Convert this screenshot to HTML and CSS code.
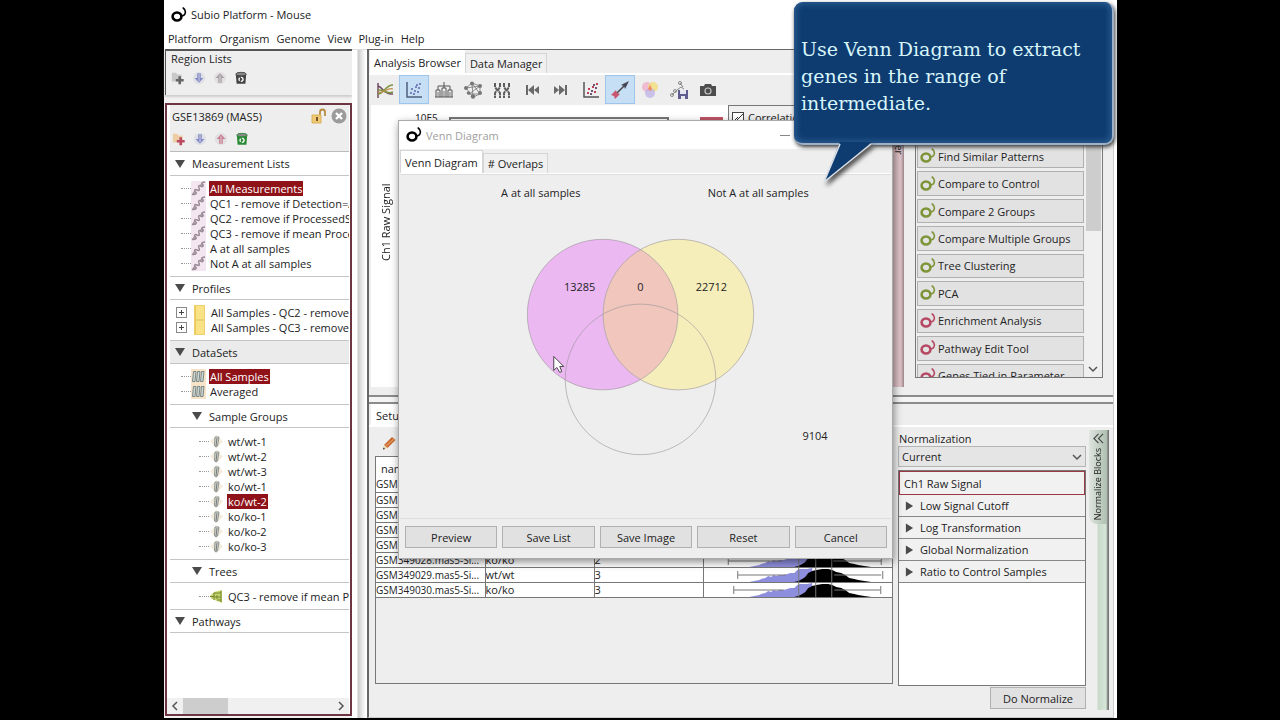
FILE: index.html
```html
<!DOCTYPE html>
<html lang="en">
<head>
<meta charset="utf-8">
<title>Subio Platform - Mouse</title>
<link rel="stylesheet" href="styles.css">
</head>
<body>
<svg class="defs" aria-hidden="true">
  <symbol id="brand" viewBox="0 0 16 16"><ellipse cx="6" cy="9.500" rx="4.400" ry="4" fill="none" stroke="currentColor" stroke-width="2.600"/><path d="M12.200 1c1.800 1.400 2.600 3.800 1.800 5.800-.6 1.500-1.800 2.200-3.600 2.200" fill="none" stroke="currentColor" stroke-width="1.600" stroke-linecap="round"/></symbol>
  <symbol id="folder-add" viewBox="0 0 16 16"><path d="M1 2h5l1 2h5v8H1z" fill="var(--a)"/><path d="M8.500 6h3v3h3v3h-3v3h-3v-3h-3V9h3z" fill="var(--b)"/></symbol>
  <symbol id="down" viewBox="0 0 16 16"><circle cx="8" cy="8" r="7" fill="#dfe0e6"/><path d="M6 2.500h4V8h3l-5 5.500L3 8h3z" fill="currentColor"/><path d="M8 3v9" stroke="#fff" stroke-width=".7"/></symbol>
  <symbol id="up" viewBox="0 0 16 16"><circle cx="8" cy="8" r="7" fill="#e2e0e2"/><path d="M6 13.500h4V8h3L8 2.500 3 8h3z" fill="currentColor"/><path d="M8 5v8" stroke="#fff" stroke-width=".7"/></symbol>
  <symbol id="bin" viewBox="0 0 16 16"><path d="M2 3.500h12l-1 11H3z" fill="currentColor"/><ellipse cx="8" cy="3.500" rx="6" ry="2" fill="#888" stroke="currentColor"/><circle cx="8" cy="9.500" r="2.300" fill="none" stroke="#fff" stroke-width="1.500" stroke-dasharray="3.500 1.300"/></symbol>
  <symbol id="heat" viewBox="0 0 15 15"><path d="M0 0h15v15H0z" fill="#f4e6f1"/><path d="M1 13c2 1 4 0 3-2s0-3 2-2 3 0 2-2 0-3 2-2 2-1 1-2 1-2 3-2" fill="none" stroke="#9a8a96" stroke-width="1.500"/><circle cx="4" cy="12" r="1.500" fill="none" stroke="#9a8a96"/><circle cx="11" cy="4.500" r="1.500" fill="none" stroke="#9a8a96"/></symbol>
  <symbol id="tubes" viewBox="0 0 15 15"><path d="M0 0h15v15H0z" fill="#f6e3c8"/><g fill="#cdd6d4" stroke="#71807f" stroke-width=".9"><path d="M2.500 2.500h2.500L4 12.500H1.500zM6.500 2.500H9L8 12.500H5.500zM10.500 2.500H13L12 12.500H9.500z"/></g></symbol>
  <symbol id="tube" viewBox="0 0 15 15"><path d="M1 7.500 7.500 1 14 7.500 7.500 14z" fill="#f3ecdc"/><path d="M6 3h4L8.500 12q-1.500 2-3 0z" fill="#d2d8d2" stroke="#8f958f"/><path d="M8 4 7 12" stroke="#777"/></symbol>
  <symbol id="book" viewBox="0 0 15 15"><path d="M2 0h11v15H2z" fill="#fae287"/><path d="M2 0h2v15H2zM4 1h8" fill="#eec95a"/><path d="M2.500.5h10v14h-10z" fill="none" stroke="#ecd06e"/></symbol>
  <symbol id="dendro" viewBox="0 0 15 15"><path d="M13 1v13L2 9.500 1 7l4-4z" fill="#c6d46a"/><path d="M1 7.500h4M5 4v7M5 4h7M5 8h7M8 6v4M8 11h4M12 2v11" fill="none" stroke="#738837"/></symbol>
  <symbol id="triangle" viewBox="0 0 10 10"><path d="M0 1h10L5 9z" fill="#4b4b4b"/></symbol>
  <symbol id="play" viewBox="0 0 10 10"><path d="M1 0v10l8-5z" fill="#4b4b4b"/></symbol>
</svg>

<div class="app">
  <header class="titlebar"><svg class="i16"><use href="#brand"/></svg><span>Subio Platform - Mouse</span></header>
  <nav class="menubar"><button>Platform</button><button>Organism</button><button>Genome</button><button>View</button><button>Plug-in</button><button>Help</button></nav>

  <div class="workspace">
    <aside class="side">
      <section class="regions">
        <h2>Region Lists</h2>
        <div class="tools gray">
          <button aria-label="New list"><svg><use href="#folder-add"/></svg></button>
          <button aria-label="Import" class="blue"><svg><use href="#down"/></svg></button>
          <button aria-label="Export"><svg><use href="#up"/></svg></button>
          <button aria-label="Delete" class="dark"><svg><use href="#bin"/></svg></button>
        </div>
      </section>
      <section class="series">
        <div class="series-head">
          <h2>GSE13869 (MAS5)</h2>
          <button aria-label="Unlock"><svg viewBox="0 0 16 16"><path d="M9 8V4a2.500 2.500 0 0 1 5 0v4" fill="none" stroke="#b78d43" stroke-width="1.800"/><path d="M1 7h9v8H1z" fill="#f0ca73" stroke="#d9b05a"/><path d="M5 9h2v4H5z" fill="#765528"/></svg></button>
          <button aria-label="Close"><svg viewBox="0 0 16 16"><circle cx="8" cy="8" r="7.500" fill="#9b9b9b"/><path d="M5 5l6 6M11 5l-6 6" stroke="#fff" stroke-width="2.400"/></svg></button>
        </div>
        <div class="tools color">
          <button aria-label="New list"><svg><use href="#folder-add"/></svg></button>
          <button aria-label="Import" class="blue"><svg><use href="#down"/></svg></button>
          <button aria-label="Export" class="rose"><svg><use href="#up"/></svg></button>
          <button aria-label="Delete" class="green"><svg><use href="#bin"/></svg></button>
        </div>
        <div class="tree">
          <button class="head"><svg><use href="#triangle"/></svg>Measurement Lists</button>
          <ul>
            <li><svg><use href="#heat"/></svg><span class="sel">All Measurements</span></li>
            <li><svg><use href="#heat"/></svg><span>QC1 - remove if Detection=A</span></li>
            <li><svg><use href="#heat"/></svg><span>QC2 - remove if ProcessedSi</span></li>
            <li><svg><use href="#heat"/></svg><span>QC3 - remove if mean Proce</span></li>
            <li><svg><use href="#heat"/></svg><span>A at all samples</span></li>
            <li><svg><use href="#heat"/></svg><span>Not A at all samples</span></li>
          </ul>
          <button class="head"><svg><use href="#triangle"/></svg>Profiles</button>
          <ul class="expandable">
            <li><svg><use href="#book"/></svg><span>All Samples - QC2 - remove</span></li>
            <li><svg><use href="#book"/></svg><span>All Samples - QC3 - remove</span></li>
          </ul>
          <button class="head active"><svg><use href="#triangle"/></svg>DataSets</button>
          <ul>
            <li><svg><use href="#tubes"/></svg><span class="sel">All Samples</span></li>
            <li><svg><use href="#tubes"/></svg><span>Averaged</span></li>
          </ul>
          <button class="head sub"><svg><use href="#triangle"/></svg>Sample Groups</button>
          <ul class="deep">
            <li><svg><use href="#tube"/></svg><span>wt/wt-1</span></li>
            <li><svg><use href="#tube"/></svg><span>wt/wt-2</span></li>
            <li><svg><use href="#tube"/></svg><span>wt/wt-3</span></li>
            <li><svg><use href="#tube"/></svg><span>ko/wt-1</span></li>
            <li><svg><use href="#tube"/></svg><span class="sel">ko/wt-2</span></li>
            <li><svg><use href="#tube"/></svg><span>ko/ko-1</span></li>
            <li><svg><use href="#tube"/></svg><span>ko/ko-2</span></li>
            <li><svg><use href="#tube"/></svg><span>ko/ko-3</span></li>
          </ul>
          <button class="head sub"><svg><use href="#triangle"/></svg>Trees</button>
          <ul class="deep"><li><svg><use href="#dendro"/></svg><span>QC3 - remove if mean Pr</span></li></ul>
          <button class="head"><svg><use href="#triangle"/></svg>Pathways</button>
        </div>
        <div class="hscroll"><svg viewBox="0 0 16 16"><path d="M10 4 6 8l4 4"/></svg><i></i><svg viewBox="0 0 16 16"><path d="m6 4 4 4-4 4"/></svg></div>
      </section>
    </aside>

    <div class="splitter"></div>

    <main class="main">
      <section class="browser">
        <div class="tabs"><button class="on">Analysis Browser</button><button>Data Manager</button></div>
        <div class="toolbar">
          <button aria-label="Line graph"><svg viewBox="0 0 20 20"><path d="M3 3v15M3 6c4 0 5 9 15 8" stroke="#6f4963" stroke-width="1.500"/><path d="M3 14c6 0 7-9 15-9M3 10c7-1 8 5 15 2" stroke="#7f9340" stroke-width="1.500"/><path d="M3 12c6 2 9-5 15-3" stroke="#be8c4b" stroke-width="1.200"/></svg></button>
          <button class="on" aria-label="Scatter plot"><svg viewBox="0 0 20 20"><path d="M3 2v15h15" stroke="#4d6080" stroke-width="1.500"/><path d="M6 13h2M7 9h2M10 11h2M9 14h2M13 12h2M11 7h2M14 8h2M15 4h2M12 5h2" stroke="#7983bd" stroke-width="2"/></svg></button>
          <button aria-label="Hierarchical tree"><svg viewBox="0 0 20 20"><path d="M2 17V10h4v7M8 17V8h4v9M14 17v-7h4v7M4 10V6h6M10 8V2M10 6h6v4M1 17h18" stroke="#555"/><path d="M4 12v5M10 11v6M16 12v5" stroke="#777"/></svg></button>
          <button aria-label="Network"><svg viewBox="0 0 20 20"><path d="M3 8 9 3l8 3v8l-7 3-7-9 14-2-11 8 11 0-8-11 1 14" stroke="#777" stroke-width=".8"/><g fill="#777"><circle cx="3" cy="8" r="2"/><circle cx="9" cy="3.500" r="2"/><circle cx="17" cy="6" r="2"/><circle cx="17" cy="13" r="2"/><circle cx="10" cy="16.500" r="2.200"/><circle cx="5.500" cy="13" r="1.800"/></g></svg></button>
          <button aria-label="Chromosomes"><svg viewBox="0 0 20 20"><path d="M3 3v4l2 3-2 3v5M8 3v4l-2 3 2 3v5M12 3v4l2 3-2 3v5M17 3v4l-2 3 2 3v5" stroke="#5d5d5d" stroke-width="2" stroke-dasharray="4 .6"/></svg></button>
          <button aria-label="Previous"><svg viewBox="0 0 20 20"><path d="M4 5h2v10H4zM12 5v10l-6-5zM17 6v8l-5-4z" fill="#696969"/></svg></button>
          <button aria-label="Next"><svg viewBox="0 0 20 20"><path d="M14 5h2v10h-2zM8 5v10l6-5zM3 6v8l5-4z" fill="#696969"/></svg></button>
          <button aria-label="Select by plot"><svg viewBox="0 0 20 20"><path d="M3 2v15h15" stroke="#555" stroke-width="1.500"/><path d="M6 13h2M7 9h2M13 12h2M11 7h2M15 4h2" stroke="#be405b" stroke-width="2"/><path d="M10 11h2M9 14h2M14 8h2M12 5h2" stroke="#6f5877" stroke-width="2"/></svg></button>
          <button class="on" aria-label="Arrow"><svg viewBox="0 0 20 20"><path d="m6 14 9-9" stroke="#444" stroke-width="1.500"/><path d="m11 5 8-4-4 8-1-3z" fill="#445"/><path d="m1 15 5-5 1 3 3 1-5 5-1-3z" fill="#c8566f"/></svg></button>
          <button aria-label="Venn diagram"><svg viewBox="0 0 20 20"><circle cx="7" cy="7" r="5" fill="#f0b3cc" opacity=".85"/><circle cx="13" cy="7" r="5" fill="#f1dd78" opacity=".8"/><circle cx="10" cy="13" r="5" fill="#bfb5e7" opacity=".8"/><path d="m10 5 2 4-2 2-2-2z" fill="#f08c67"/></svg></button>
          <button aria-label="Save network"><svg viewBox="0 0 20 20"><path d="M3 15 8 10l4-3 3 2M11 3l3 4" stroke="#888"/><circle cx="3" cy="15" r="1.500" stroke="#888"/><circle cx="6" cy="11" r="1.500" stroke="#888"/><circle cx="11" cy="3" r="1.500" stroke="#888"/><path d="M9 10h10v9H9z" fill="#625d91"/><path d="M11 10h6v4h-6zM12 16h4v3h-4z" fill="#e7e7ef"/></svg></button>
          <button aria-label="Snapshot"><svg viewBox="0 0 20 20"><path d="M2 6h4l1-2h6l1 2h4v10H2z" fill="#4d4d4d"/><circle cx="10" cy="11" r="3.600" fill="#c6c6c6"/><circle cx="10" cy="11" r="2.400" fill="#4d4d4d"/></svg></button>
        </div>
        <div class="stage">
          <div class="plot">
            <div class="ylabel">Ch1 Raw Signal</div>
            <div class="axis"><span>10E5</span><i class="frame"></i><i class="redbar"></i></div>
            <label class="corr"><input type="checkbox" checked>Correlation</label>
          </div>
          <div class="pinkstrip"><span>Gene Filter</span></div>
          <div class="plugins">
            <div class="list">
              <button class="g"><svg><use href="#brand"/></svg>Find Similar Patterns</button>
              <button class="g"><svg><use href="#brand"/></svg>Compare to Control</button>
              <button class="g"><svg><use href="#brand"/></svg>Compare 2 Groups</button>
              <button class="g"><svg><use href="#brand"/></svg>Compare Multiple Groups</button>
              <button class="g"><svg><use href="#brand"/></svg>Tree Clustering</button>
              <button class="g"><svg><use href="#brand"/></svg>PCA</button>
              <button><svg><use href="#brand"/></svg>Enrichment Analysis</button>
              <button><svg><use href="#brand"/></svg>Pathway Edit Tool</button>
              <button><svg><use href="#brand"/></svg>Genes Tied in Parameter</button>
            </div>
            <div class="vscroll"><i></i><svg viewBox="0 0 16 16"><path d="m4 6 4 4 4-4"/></svg></div>
          </div>
        </div>
      </section>

      <div class="hsplit"></div>

      <section class="setup">
        <div class="tabs"><button class="on">Setup</button></div>
        <div class="setup-body">
          <div class="samples">
            <div class="edit"><button aria-label="Edit"><svg viewBox="0 0 16 16"><path d="m3 10 8-8 3.500 3-8 8z" fill="#c8692f"/><path d="m5 11 8-7" stroke="#e69a5f" stroke-width="1.200"/><path d="m3 10 3.500 3L2 14.500z" fill="#ecd3ac"/><path d="m2 14.500.5-2 1.500 1.500z" fill="#222"/></svg></button></div>
            <div class="tablebox">
              <table>
                <colgroup><col class="c1"><col class="c1"><col class="c1"><col></colgroup>
                <thead><tr><th>name</th><th>group</th><th>no.</th><th></th></tr></thead>
                <tbody>
                  <tr><td>GSM349023.mas5-Si...</td><td>wt/wt</td><td>1</td><td></td></tr>
                  <tr><td>GSM349024.mas5-Si...</td><td>ko/ko</td><td>1</td><td></td></tr>
                  <tr><td>GSM349025.mas5-Si...</td><td>ko/wt</td><td>1</td><td></td></tr>
                  <tr><td>GSM349026.mas5-Si...</td><td>ko/wt</td><td>2</td><td></td></tr>
                  <tr><td>GSM349027.mas5-Si...</td><td>wt/wt</td><td>2</td><td></td></tr>
                  <tr><td>GSM349028.mas5-Si...</td><td>ko/ko</td><td>2</td><td><svg viewBox="0 0 188 14"><use href="#dist"/><path d="M24 4v8M24 8h54M129 8h48M177 4v8" stroke="#777"/></svg></td></tr>
                  <tr><td>GSM349029.mas5-Si...</td><td>wt/wt</td><td>3</td><td><svg viewBox="0 0 188 14">
                    <g id="dist"><path d="M45 14l5-1 5-1 2-1 4-1 3-2 3 1 2-2 3 1 3-1 4 0 4-1 3-1 4 0 3-3 3-1 4 0 3 0 5-1v14z" fill="#8e8ede"/><path d="M90 14l4-1 4-2 3-2 3-4 4-2 4-1 6-1 6 0 4 1 4 2 5 1 4 2 4 3 5 1 4 1 6 1 7 1z" fill="#000"/><path d="M94.500 0v14M111.500 0v14M127.500 0v14" stroke="#777"/></g>
                    <path d="M33.500 3v8M33.500 7h48M130 7h47M178.500 3v8" stroke="#777"/></svg></td></tr>
                  <tr><td>GSM349030.mas5-Si...</td><td>ko/ko</td><td>3</td><td><svg viewBox="0 0 188 14"><use href="#dist"/><path d="M29.500 3v8M29.500 7h50M130 7h46M176.500 3v8" stroke="#777"/></svg></td></tr>
                </tbody>
              </table>
            </div>
          </div>
          <div class="norm">
            <label for="norm">Normalization</label>
            <div class="select"><select id="norm"><option>Current</option></select><svg viewBox="0 0 16 16"><path d="m4 6 4 4 4-4"/></svg></div>
            <div class="blocks">
              <button class="first">Ch1 Raw Signal</button>
              <button><svg><use href="#play"/></svg>Low Signal Cutoff</button>
              <button><svg><use href="#play"/></svg>Log Transformation</button>
              <button><svg><use href="#play"/></svg>Global Normalization</button>
              <button><svg><use href="#play"/></svg>Ratio to Control Samples</button>
            </div>
            <button class="btn do">Do Normalize</button>
          </div>
          <div class="greenstrip"><button aria-label="Normalize Blocks"><svg viewBox="0 0 12 12"><path d="M6 1 1 6l5 5M11 1 6 6l5 5" fill="none" stroke="#444" stroke-width="1.200"/></svg><span>Normalize Blocks</span></button></div>
        </div>
      </section>
    </main>
  </div>

  <section class="dialog" role="dialog" aria-label="Venn Diagram">
    <header><svg class="i16"><use href="#brand"/></svg><span>Venn Diagram</span><button aria-label="Minimize"><i></i></button></header>
    <div class="tabs"><button class="on">Venn Diagram</button><button># Overlaps</button></div>
    <div class="venn">
      <svg viewBox="0 0 490 344">
        <circle cx="202" cy="140" r="75.500" fill="#ebb8f2"/>
        <circle cx="278" cy="140" r="75.500" fill="#f5eebb"/>
        <path d="M240 74.800a75.500 75.500 0 0 1 0 130.400a75.500 75.500 0 0 1 0-130.400z" fill="#f0c6bd"/>
        <g fill="none" stroke="#9b9498" stroke-opacity=".6"><circle cx="202" cy="140" r="75.500"/><circle cx="278" cy="140" r="75.500"/><circle cx="240" cy="205" r="75.500"/></g>
        <g text-anchor="middle" fill="#222">
          <text x="140" y="22">A at all samples</text><text x="358" y="22">Not A at all samples</text>
          <text x="179" y="116">13285</text><text x="240" y="116">0</text><text x="311" y="116">22712</text><text x="415" y="266">9104</text>
        </g>
        <path d="M153 182v14l3-3 3 5 2-1-2-5h4z" fill="#fff" stroke="#333" stroke-width=".9"/>
      </svg>
    </div>
    <footer><button class="btn">Preview</button><button class="btn">Save List</button><button class="btn">Save Image</button><button class="btn">Reset</button><button class="btn">Cancel</button></footer>
  </section>

  <div class="callout">
    <p>Use Venn Diagram to extract genes in the range of intermediate.</p>
    <svg viewBox="0 0 60 44"><path d="M17 0 1 40 49 0z" fill="#0e3c70"/><path d="M17 2 1 40 48 2" fill="none" stroke="#d9e0e8" stroke-width="1.500"/></svg>
  </div>
</div>
</body>
</html>
```
FILE: styles.css
```css
* { box-sizing: border-box; }
body {
  margin: 0;
  padding: 0 163px 2px 164px;
  height: 100vh;
  background: #000;
  color: #222;
  font: 11px/15px "Open Sans", "Noto Sans", sans-serif;
}
button, select, input { font: inherit; color: inherit; }
button { border: 0; padding: 0; background: none; text-align: left; white-space: nowrap; }
h2 { margin: 0; font: inherit; }
ul { list-style: none; margin: 0; padding: 5px 0; }
.defs { position: absolute; width: 0; height: 0; }
.i16 { width: 16px; height: 16px; color: #000; }

.app { position: relative; height: 100%; background: #fff; display: flex; flex-direction: column; }
.titlebar { flex: none; height: 29px; display: flex; align-items: center; gap: 4px; padding-left: 7px; }
.menubar { flex: none; height: 20px; display: flex; align-items: center; gap: 7px; padding: 0 0 2px 4px; }
.workspace { flex: 1; min-height: 0; display: flex; }

/* sidebar */
.side { width: 188px; display: flex; flex-direction: column; padding: 0 0 2px 1px; background: #f2f2f2; }
.regions { height: 46px; border: 1px solid #555; border-width: 2px 0 0 1px; padding: 0 5px; background: #eee; box-shadow: 0 2px 2px #ccc; }
.tools { display: flex; gap: 5px; margin-top: 5px; }
.tools button, .tools svg { display: block; width: 14px; height: 14px; }
.tools button + button { margin-left: 2px; }
.gray { --a: #c9c9c9; --b: #666; color: #a5a0a2; }
.color { --a: #edcda4; --b: #bb4a5f; }
.tools button.blue { color: #8288c4; }
.tools button.rose { color: #c47f92; }
.tools button.dark { color: #444; }
.tools button.green { color: #2b8a36; }
.series { flex: 1; min-height: 0; margin-top: 8px; border: 2px solid #6d3541; background: #fff; display: flex; flex-direction: column; padding: 0 1px 0 3px; }
.series-head { display: flex; align-items: center; gap: 4px; height: 22px; background: #eee; padding: 0 2px; }
.series-head h2 { flex: 1; }
.series-head svg { display: block; width: 16px; height: 16px; }
.series .tools { margin: 0; padding: 5px 2px 0; height: 24px; background: #eee; }
.tree { flex: 1; overflow: hidden; border-top: 1px solid #bbb; }
.head { display: flex; align-items: center; gap: 7px; width: 100%; height: 24px; border: 1px solid #c4c4c4; border-width: 1px 0; padding-left: 5px; }
.head:first-child { border-top: 0; }
.head.active { background: #ebebeb; }
.head.sub { padding-left: 22px; }
.head svg { width: 10px; height: 10px; }
li { display: flex; align-items: center; height: 15px; white-space: nowrap; padding-left: 11px; }
li::before { content: ""; flex: none; width: 10px; border-top: 1px dotted #999; }
li svg { flex: none; width: 15px; height: 15px; margin-right: 3px; }
li span { padding: 0 1px; }
.deep { padding-top: 6px; }
.deep li { padding-left: 29px; }
.sel { background: #8e1218; color: #fff; }
.expandable li { padding-left: 6px; }
.expandable li::before { width: 9px; height: 9px; margin-right: 5px; border: 1px solid #888; background: linear-gradient(#444, #444) center / 5px 1px no-repeat, linear-gradient(#444, #444) center / 1px 5px no-repeat; }
.hscroll { flex: none; display: flex; height: 16px; background: #f0f0f0; margin-left: -3px; }
.hscroll svg { width: 16px; height: 16px; }
.hscroll svg:last-child { margin-left: auto; }
.hscroll i { width: 45px; background: #cdcdcd; }
.hscroll path, .vscroll path, .select path { fill: none; stroke: #555; stroke-width: 1.500; }

.splitter { width: 15px; background: linear-gradient(90deg, #fff 5px, #c9c9c9 6px, #e8e8e8 10px, #fff 14px); border-top: 1px solid #ddd; }

/* main */
.main { flex: 1; min-width: 0; display: flex; flex-direction: column; margin-right: 3px; border: 1px solid #666; border-right-color: #ccc; border-bottom-color: #ccc; border-left-width: 2px; background: #eee; }
.tabs { flex: none; display: flex; align-items: flex-end; background: #eee; }
.tabs button { height: 20px; padding: 0 4px; border: 1px solid #d5d5d5; border-bottom: 0; background: #f0f0f0; }
.tabs .on { height: 23px; background: #fff; border-color: #fff; }
.browser { height: 345px; display: flex; flex-direction: column; }
.browser .tabs { padding-left: 1px; border-bottom: 2px solid #fff; }
.browser .tabs .on { padding: 0 3px; }
.toolbar { flex: none; display: flex; width: 354px; height: 29px; padding-left: 1px; }
.toolbar button { flex: 1; display: flex; align-items: center; justify-content: center; border: 1px solid transparent; }
.toolbar .on { background: #c7dff5; border-color: #9fc6ea; }
.toolbar svg { width: 20px; height: 20px; fill: none; }
.stage { flex: 1; min-height: 0; display: flex; }
.plot { flex: 1; display: flex; background: #fff; margin: 1px 0 8px 2px; overflow: hidden; }
.ylabel { writing-mode: vertical-rl; transform: rotate(180deg); white-space: nowrap; text-align: center; width: 15px; height: 100px; margin: 67px 0 0 7px; }
.axis { flex: 1; display: flex; align-items: flex-start; padding: 6px 0 0 22px; }
.axis span { width: 34px; font-size: 10px; }
.frame { width: 220px; height: 60px; margin-top: 6px; border: 2px solid #777; }
.redbar { width: 23px; height: 60px; margin: 6px 0 0 31px; background: #bd5566; }
.corr { width: 165px; height: 200px; display: flex; align-items: flex-start; gap: 4px; padding: 4px 3px; border: 1px solid #777; border-width: 1px 0 0 1px; background: #f0f0f0; }
.corr input { appearance: none; width: 12px; height: 12px; margin: 2px 0 0; border: 1px solid #444; background: linear-gradient(135deg, transparent 46%, #333 46% 56%, transparent 56%) 1px 4px / 4px 4px no-repeat, linear-gradient(-45deg, transparent 45%, #333 45% 57%, transparent 57%) 3px 1px / 7px 7px no-repeat, #fff; }
.pinkstrip { width: 11px; margin-bottom: 8px; background: linear-gradient(90deg, #cfb6ba, #dfc4c8 70%, #9a858a); overflow: hidden; font-size: 10px; line-height: 11px; }
.pinkstrip span { writing-mode: vertical-rl; }
.plugins { width: 188px; margin: 26px 10px 17px 11px; border: 1px solid #777; border-top: 0; display: flex; background: #eee; overflow: hidden; }
.list { flex: 1; height: 244px; padding: 0 1px; margin-top: 14px; display: grid; grid-auto-rows: 1fr; gap: 3px; }
.list button { display: flex; align-items: center; gap: 2px; padding-left: 2px; min-height: 0; border: 1px solid #b0b0b0; background: #e2e2e2; color: #222; }
.list svg { width: 16px; height: 16px; color: #b64864; }
.list .g svg { color: #7d9438; }
.vscroll { width: 17px; background: #f0f0f0; display: flex; flex-direction: column; justify-content: space-between; }
.vscroll i { height: 101px; margin: 0 1px; background: #cdcdcd; }
.vscroll svg { width: 16px; height: 16px; }
.hsplit { flex: none; height: 9px; border: 2px solid #8b8b8b; border-width: 2px 0; background: #f4f4f4; }

/* sample setup */
.setup { flex: 1; min-height: 0; display: flex; flex-direction: column; }
.setup .tabs { padding-left: 2px; border-bottom: 2px solid #fff; }
.setup .tabs .on { height: 21px; }
.setup-body { flex: 1; min-height: 0; display: flex; padding: 0 4px 7px 6px; }
.samples { flex: 1; min-width: 0; display: flex; flex-direction: column; padding-bottom: 26px; }
.edit { height: 29px; padding: 8px 6px; }
.edit svg { width: 16px; height: 16px; display: block; }
.tablebox { flex: 1; border: 1px solid #777; }
table { width: 100%; table-layout: fixed; border-collapse: collapse; background: #fff; }
.c1 { width: 109px; }
th, td { height: 15px; padding: 0; line-height: 14px; white-space: nowrap; overflow: hidden; border: 1px solid #777; border-top: 0; text-align: left; font-weight: 400; }
th:first-child, td:first-child { border-left: 0; }
td:first-child { font-size: 10px; }
th:last-child, td:last-child { border-right: 0; }
th { height: 20px; padding: 4px 5px 0; border-bottom: 0; }
td svg { display: block; width: 100%; height: 14px; }
.norm { width: 188px; margin-left: 5px; padding-top: 4px; display: flex; flex-direction: column; }
.norm label { padding-left: 1px; }
.select { display: flex; align-items: center; height: 21px; background: #e5e5e5; border: 1px solid #b5b5b5; }
.select select { flex: 1; appearance: none; border: 0; background: none; padding: 0 3px; }
.select svg { width: 16px; height: 16px; }
.blocks { flex: 1; margin-top: 3px; background: #fff; border: 1px solid #777; }
.blocks button { display: flex; align-items: center; gap: 6px; width: 100%; height: 22px; padding-left: 6px; background: #f1f1f1; border-bottom: 1px solid #888; }
.blocks .first { height: 24px; padding-left: 4px; border: 1px solid #9b3a45; }
.blocks svg { width: 9px; height: 10px; }
.btn { display: block; height: 22px; border: 1px solid #b0b0b0; background: #e1e1e1; text-align: center; }
.do { width: 96px; margin: 1px 0 1px auto; }
.greenstrip { width: 20px; margin: 3px 0 0 3px; background: linear-gradient(90deg, #eee 8px, #c8dac9 9px, #d6e6d8 17px, #777 19px); }
.greenstrip button { display: flex; flex-direction: column; align-items: center; gap: 4px; width: 18px; height: 94px; padding-top: 3px; background: linear-gradient(90deg, #dfe4df, #aebfb0); border-radius: 0 0 0 8px; }
.greenstrip svg { width: 11px; height: 11px; }
.greenstrip span { writing-mode: vertical-rl; transform: rotate(180deg); font-size: 9px; line-height: 12px; }

/* floating window */
.dialog { position: absolute; left: 234px; top: 120px; width: 495px; height: 439px; display: flex; flex-direction: column; padding: 0 1px; border: 1px solid #aaa; background: #eee; box-shadow: 1px 3px 8px rgba(0, 0, 0, .45); }
.dialog header { flex: none; display: flex; align-items: center; gap: 4px; height: 28px; margin: 0 -1px; padding: 0 0 0 7px; background: #fff; color: #a0a0a0; }
.dialog header button { margin-left: auto; width: 112px; }
.dialog header i { display: block; width: 10px; border-top: 1px solid #888; }
.dialog .tabs { padding-top: 1px; border-bottom: 1px solid #fff; }
.dialog .tabs button { border-color: #d5d5d5; }
.venn { flex: 1; min-height: 0; border: 1px solid #ddd; border-width: 1px 0; }
.venn svg { display: block; width: 100%; height: 100%; }
.dialog footer { flex: none; display: grid; grid-template-columns: repeat(5, 1fr); gap: 5px; padding: 7px 4px 10px 5px; }

.callout { position: absolute; left: 630px; top: 2px; width: 320px; height: 143px; padding: 34px 6px 0 7px; border-radius: 9px; border: 1px solid #9db0c6; border-width: 0 2px 2px 0; background: #0e3c70; color: #d8f5fa; box-shadow: inset 0 0 6px 2px #2c5d90, 1px 2px 4px #333; }
.callout p { margin: 0; font: 19px/27px "DejaVu Serif", serif; }
.callout svg { position: absolute; left: 29px; top: 140px; width: 60px; height: 44px; filter: drop-shadow(3px 3px 2px #555); }
```
